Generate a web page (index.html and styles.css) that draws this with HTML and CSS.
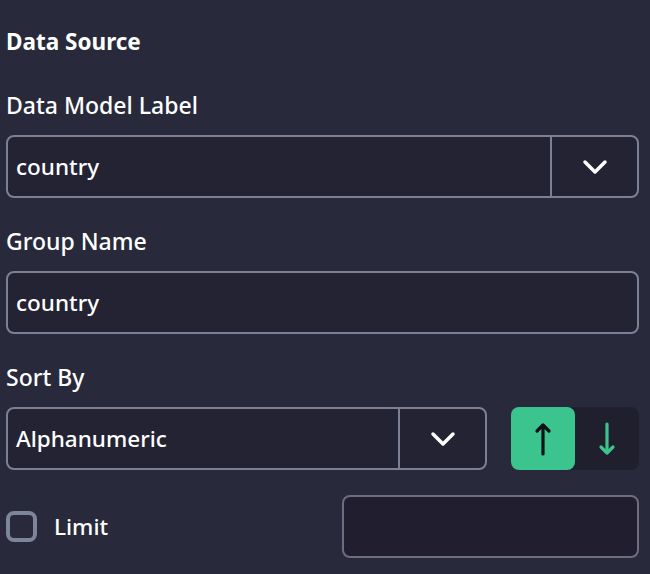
FILE: index.html
```html
<!DOCTYPE html>
<html>
<head>
<meta charset="utf-8">
<link rel="stylesheet" href="styles.css">
</head>
<body>
<div class="panel">
  <div class="title">Data Source</div>
  <div class="label first">Data Model Label</div>
  <div class="select">
    <div class="value">country</div>
    <div class="chev">
      <svg width="26" height="24" viewBox="0 0 26 24"><path d="M3 7 L13 17 L23 7" fill="none" stroke="#fff" stroke-width="3.5" stroke-linecap="round" stroke-linejoin="round"/></svg>
    </div>
  </div>
  <div class="label">Group Name</div>
  <div class="input"><span class="value">country</span></div>
  <div class="label">Sort By</div>
  <div class="sort-row">
    <div class="select sort-select">
      <div class="value">Alphanumeric</div>
      <div class="chev">
        <svg width="26" height="24" viewBox="0 0 26 24"><path d="M3 7 L13 17 L23 7" fill="none" stroke="#fff" stroke-width="3.5" stroke-linecap="round" stroke-linejoin="round"/></svg>
      </div>
    </div>
    <div class="toggle">
      <div class="tbtn active">
        <svg width="20" height="36" viewBox="0 0 20 36"><path d="M10 33 V4 M4 10 L10 4 L16 10" fill="none" stroke="#101018" stroke-width="3.2" stroke-linecap="round" stroke-linejoin="round"/></svg>
      </div>
      <div class="tbtn">
        <svg width="20" height="36" viewBox="0 0 20 36"><path d="M10 3 V32 M4 26 L10 32 L16 26" fill="none" stroke="#3cc48e" stroke-width="3.2" stroke-linecap="round" stroke-linejoin="round"/></svg>
      </div>
    </div>
  </div>
  <div class="limit-row">
    <div class="check-wrap">
      <div class="checkbox"></div>
      <span class="limit-label">Limit</span>
    </div>
    <div class="input limit-input"></div>
  </div>
</div>
</body>
</html>
```
FILE: styles.css
```css
html, body {
  margin: 0;
  padding: 0;
  background: #282a3c;
  height: 100%;
}
body {
  font-family: "Noto Sans", "Lato", sans-serif;
  color: #ffffff;
}
.panel {
  padding: 26px 11px 0 6px;
  display: flex;
  flex-direction: column;
}
.title {
  font-size: 22.5px;
  font-weight: 700;
  line-height: 32px;
}
.label {
  font-size: 23px;
  font-weight: 500;
  line-height: 30px;
  margin-top: 28px;
  margin-bottom: 15px;
}
.label.first {
  margin-top: 32px;
}
.select, .input {
  box-sizing: border-box;
  height: 63px;
  border: 2px solid #7c8095;
  border-radius: 8px;
  background: #242334;
  display: flex;
  align-items: center;
}
.value {
  flex: 1;
  font-size: 22.5px;
  font-weight: 500;
  padding-left: 8px;
}
.chev {
  width: 85px;
  height: 100%;
  border-left: 2px solid #7c8095;
  display: flex;
  align-items: center;
  justify-content: center;
}
.sort-row {
  display: flex;
  align-items: center;
  gap: 24px;
}
.sort-select {
  flex: 1;
}
.toggle {
  width: 128px;
  height: 63px;
  display: flex;
  background: #201f2e;
  border-radius: 8px;
}
.tbtn {
  flex: 1;
  display: flex;
  align-items: center;
  justify-content: center;
  border-radius: 8px;
}
.tbtn.active {
  background: #3cc48e;
}
.limit-row {
  margin-top: 25px;
  display: flex;
  align-items: center;
  justify-content: space-between;
}
.check-wrap {
  display: flex;
  align-items: center;
}
.checkbox {
  box-sizing: border-box;
  width: 31px;
  height: 31px;
  border: 4px solid #7d8598;
  border-radius: 8px;
}
.limit-label {
  margin-left: 17px;
  font-size: 22.5px;
  font-weight: 500;
}
.limit-input {
  width: 297px;
  border-color: #6e6d7f;
  background: #211f2f;
}
```
